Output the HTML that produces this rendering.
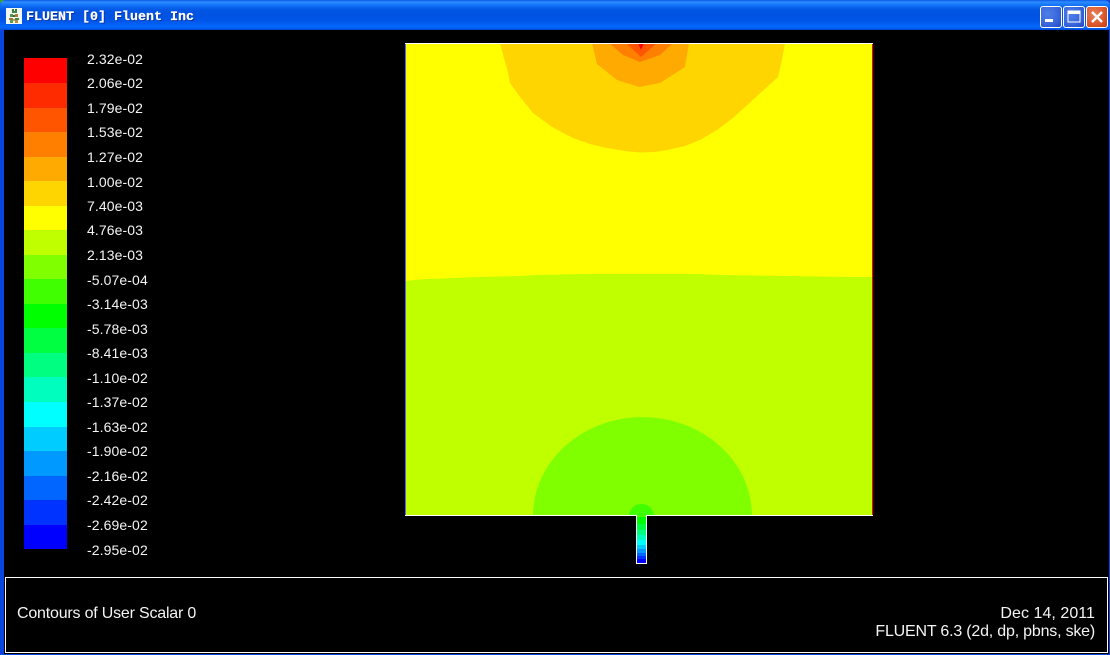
<!DOCTYPE html>
<html>
<head>
<meta charset="utf-8">
<style>
html,body{margin:0;padding:0;background:#000;}
#w{position:relative;width:1110px;height:655px;overflow:hidden;background:#0a45dd;font-family:"Liberation Sans",Arial,sans-serif;}
#corner{position:absolute;left:0;top:0;width:5px;height:3px;background:#3fa03a;}
#tb{position:absolute;left:0;top:0;width:1110px;height:30px;border-radius:6px 6px 0 0;background:linear-gradient(to bottom,#0a58e6 0,#2f8cff 2px,#1a7dfb 4px,#0a66ee 7px,#0356e4 10px,#0053e2 16px,#0056ea 21px,#0263f6 25px,#0568fb 27px,#0258ea 29px,#0047c8 30px);}
#title{position:absolute;left:26px;top:9px;font:bold 13.33px/17px "Liberation Mono",monospace;color:#fff;white-space:pre;text-shadow:1px 1px 0 #0a2f9c;-webkit-text-stroke:.2px #fff;}
.btn{position:absolute;top:6px;width:20px;height:20px;border:1px solid #fff;border-radius:3px;background:radial-gradient(circle at 35% 35%,#4f7fe8 0,#3a68dc 55%,#2348c4 100%);}
#cl{background:radial-gradient(circle at 35% 35%,#e8825c 0,#dd5a30 55%,#c23a12 100%);}
#blk{position:absolute;left:4px;top:30px;width:1105px;height:624px;background:#000;}
.b{position:absolute;left:24px;width:43px;}
.l{position:absolute;left:87px;font-size:14px;line-height:16px;color:#f4f4f4;white-space:pre;letter-spacing:.1px;}
#panel{position:absolute;left:5px;top:577px;width:1101px;height:74px;border:1px solid #fff;}
.t{position:absolute;font-size:16px;line-height:18px;color:#f4f4f4;white-space:pre;letter-spacing:-.2px;}
svg{position:absolute;left:0;top:0;}
</style>
</head>
<body>
<div id="w">
<div id="corner"></div>
<div id="tb"></div>
<svg style="left:6px;top:8px" width="16" height="16" viewBox="0 0 16 16" shape-rendering="crispEdges">
<rect width="16" height="16" fill="#f4f6f2"/>
<rect x="6" y="1" width="2" height="2" fill="#2e7d3a"/><rect x="9" y="1" width="2" height="2" fill="#2e7d3a"/>
<rect x="6" y="3" width="5" height="2" fill="#3c8a46"/>
<rect x="4" y="6" width="3" height="3" fill="#4b9a4c"/><rect x="9" y="6" width="3" height="3" fill="#a5823a"/>
<rect x="7" y="7" width="2" height="2" fill="#2f6f3a"/>
<rect x="3" y="10" width="4" height="2" fill="#9a7a35"/><rect x="9" y="10" width="4" height="2" fill="#3c8a46"/>
<rect x="4" y="12" width="3" height="3" fill="#5aa050"/><rect x="9" y="12" width="3" height="3" fill="#b58f4a"/>
<rect x="7" y="11" width="2" height="2" fill="#c0a060"/>
</svg>
<div id="title">FLUENT [0] Fluent Inc</div>
<div class="btn" style="left:1040px"></div>
<div class="btn" style="left:1063px"></div>
<div class="btn" id="cl" style="left:1086px"></div>
<svg width="1110" height="30" shape-rendering="crispEdges">
<rect x="1045" y="19" width="8" height="3" fill="#fff"/>
<rect x="1068" y="11" width="12" height="11" fill="none" stroke="#fff" stroke-width="1"/>
<rect x="1068" y="11" width="12" height="3" fill="#fff"/>
</svg>
<svg width="1110" height="30"><path d="M1092 12L1102 22M1102 12L1092 22" stroke="#fff" stroke-width="2.4" fill="none"/></svg>

<div id="blk"></div>

<div class="b" style="top:58px;height:25px;background:#ff0000"></div>
<div class="b" style="top:83px;height:25px;background:#ff2b00"></div>
<div class="b" style="top:108px;height:24px;background:#ff5500"></div>
<div class="b" style="top:132px;height:25px;background:#ff8000"></div>
<div class="b" style="top:157px;height:24px;background:#ffaa00"></div>
<div class="b" style="top:181px;height:25px;background:#ffd500"></div>
<div class="b" style="top:206px;height:24px;background:#ffff00"></div>
<div class="b" style="top:230px;height:25px;background:#bfff00"></div>
<div class="b" style="top:255px;height:24px;background:#80ff00"></div>
<div class="b" style="top:279px;height:25px;background:#40ff00"></div>
<div class="b" style="top:304px;height:24px;background:#00ff00"></div>
<div class="b" style="top:328px;height:25px;background:#00ff40"></div>
<div class="b" style="top:353px;height:24px;background:#00ff80"></div>
<div class="b" style="top:377px;height:25px;background:#00ffbf"></div>
<div class="b" style="top:402px;height:25px;background:#00ffff"></div>
<div class="b" style="top:427px;height:24px;background:#00ccff"></div>
<div class="b" style="top:451px;height:25px;background:#0099ff"></div>
<div class="b" style="top:476px;height:24px;background:#0066ff"></div>
<div class="b" style="top:500px;height:25px;background:#0033ff"></div>
<div class="b" style="top:525px;height:24px;background:#0000ff"></div>

<div class="l" style="top:51px">2.32e-02</div>
<div class="l" style="top:75px">2.06e-02</div>
<div class="l" style="top:100px">1.79e-02</div>
<div class="l" style="top:124px">1.53e-02</div>
<div class="l" style="top:149px">1.27e-02</div>
<div class="l" style="top:174px">1.00e-02</div>
<div class="l" style="top:198px">7.40e-03</div>
<div class="l" style="top:222px">4.76e-03</div>
<div class="l" style="top:247px">2.13e-03</div>
<div class="l" style="top:272px">-5.07e-04</div>
<div class="l" style="top:296px">-3.14e-03</div>
<div class="l" style="top:321px">-5.78e-03</div>
<div class="l" style="top:345px">-8.41e-03</div>
<div class="l" style="top:370px">-1.10e-02</div>
<div class="l" style="top:394px">-1.37e-02</div>
<div class="l" style="top:419px">-1.63e-02</div>
<div class="l" style="top:443px">-1.90e-02</div>
<div class="l" style="top:468px">-2.16e-02</div>
<div class="l" style="top:492px">-2.42e-02</div>
<div class="l" style="top:517px">-2.69e-02</div>
<div class="l" style="top:542px">-2.95e-02</div>

<svg width="1110" height="655">
<rect x="405" y="43" width="468" height="473" fill="#ffff00"/>
<path d="M405 281L415 280L427 279L455 278L477 277L520 276L535 275L587 274L695 274L725 275L785 276L855 277L873 277L873 516L405 516Z" fill="#bfff00"/>
<path d="M533 516A109.5 99 0 0 1 752 516Z" fill="#80ff00"/>
<path d="M629 516A12.5 12 0 0 1 654 516Z" fill="#40ff00"/>
<path d="M500 43L505 62L508 72L510 83L520 97L533 113L552 127L573 138L590 144L607 148L625 151L640 152.5L655 152L667 150L685 146L700 140L717 130L733 118L755 98L778 77L782 60L785 43Z" fill="#ffd500"/>
<path d="M592 43L597 64L617 80L639 87L660 83L685 67L689 43Z" fill="#ffaa00"/>
<path d="M609 43L623 55L640 62L660 55L673 43Z" fill="#ff8000"/>
<path d="M626 43L641 57L657 43Z" fill="#ff5500"/>
<path d="M638 43L641 50L644 43Z" fill="#ff0000"/>
<g shape-rendering="crispEdges">
<rect x="405" y="43" width="468" height="1" fill="#fff"/>
<rect x="405" y="44" width="1" height="472" fill="#5a5aff"/>
<rect x="872" y="44" width="1" height="472" fill="#ff0000"/>
<rect x="405" y="515" width="468" height="1" fill="#fff"/>
<rect x="636" y="516" width="11" height="48" fill="#fff"/>
<rect x="637" y="515" width="9" height="2" fill="#40ff00"/>
<rect x="637" y="517" width="9" height="7" fill="#00ff00"/>
<rect x="637" y="524" width="9" height="6" fill="#00ff40"/>
<rect x="637" y="530" width="9" height="5" fill="#00ff80"/>
<rect x="637" y="535" width="9" height="5" fill="#00ffbf"/>
<rect x="637" y="540" width="9" height="5" fill="#00ffff"/>
<rect x="637" y="545" width="9" height="4" fill="#00ccff"/>
<rect x="637" y="549" width="9" height="4" fill="#0099ff"/>
<rect x="637" y="553" width="9" height="3" fill="#0066ff"/>
<rect x="637" y="556" width="9" height="3" fill="#0033ff"/>
<rect x="637" y="559" width="9" height="4" fill="#0000ff"/>
</g>
</svg>

<div id="panel"></div>
<div class="t" style="left:17px;top:605px">Contours of User Scalar 0</div>
<div class="t" style="right:15px;top:605px;letter-spacing:.05px">Dec 14, 2011</div>
<div class="t" style="right:15px;top:623px">FLUENT 6.3 (2d, dp, pbns, ske)</div>
</div>
</body>
</html>
